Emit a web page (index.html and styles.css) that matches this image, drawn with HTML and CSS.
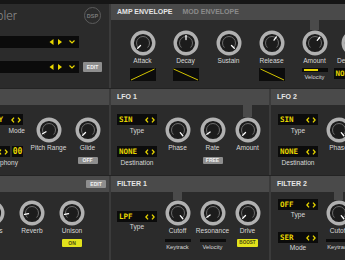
FILE: index.html
```html
<!DOCTYPE html>
<html lang="en">
<head>
<meta charset="utf-8">
<title>Sampler</title>
<link rel="stylesheet" href="styles.css">
</head>
<body>
<div class="app">
  <div class="topstrip"></div>

  <!-- ROW 1 -->
  <section class="panel">
    <div class="body main-body">
      <div class="logo-row">
        <div class="logo"><span>Sampler</span></div>
        <div class="dsp">DSP</div>
      </div>
      <div class="sel-row first">
        <div class="selbar">
          <svg class="selicons" viewBox="0 0 30 12" width="30" height="12"><path d="M4.5 3L0.5 6L4.5 9Z M9 3L13 6L9 9Z" fill="#e8d600"/><path d="M20.5 4.5L23 7L25.5 4.5" fill="none" stroke="#e8d600" stroke-width="1.2"/></svg>
        </div>
      </div>
      <div class="sel-row second">
        <div class="selbar">
          <svg class="selicons" viewBox="0 0 30 12" width="30" height="12"><path d="M4.5 3L0.5 6L4.5 9Z M9 3L13 6L9 9Z" fill="#e8d600"/><path d="M20.5 4.5L23 7L25.5 4.5" fill="none" stroke="#e8d600" stroke-width="1.2"/></svg>
        </div>
        <span class="btn grey edit-top">EDIT</span>
      </div>
    </div>
  </section>
  <div class="vdiv"></div>
  <section class="panel wide">
    <div class="band"><span class="title">AMP ENVELOPE</span><span class="title dim">MOD ENVELOPE</span></div>
    <div class="body env-body">
      <div class="col ecol">
        <div class="stem s1"></div>
        <svg class="knob" viewBox="0 0 26 26"><circle cx="13" cy="13" r="10.8"/><path d="M8.4 17.6A6.5 6.5 0 1 1 17.6 17.6"/><line x1="13" y1="5.5" x2="13" y2="9.5" transform="rotate(-135 13 13)"/></svg>
        <div class="lbl">Attack</div>
        <svg class="envbox" viewBox="0 0 26 13"><rect width="26" height="13"/><line x1="1" y1="12" x2="24.5" y2="1"/></svg>
      </div>
      <div class="col ecol">
        <div class="stem s1"></div>
        <svg class="knob" viewBox="0 0 26 26"><circle cx="13" cy="13" r="10.8"/><path d="M8.4 17.6A6.5 6.5 0 1 1 17.6 17.6"/><line x1="13" y1="5.5" x2="13" y2="9.5"/></svg>
        <div class="lbl">Decay</div>
        <svg class="envbox" viewBox="0 0 26 13"><rect width="26" height="13"/><line x1="0.5" y1="1" x2="25" y2="12"/></svg>
      </div>
      <div class="col ecol">
        <div class="stem s1"></div>
        <svg class="knob" viewBox="0 0 26 26"><circle cx="13" cy="13" r="10.8"/><path d="M8.4 17.6A6.5 6.5 0 1 1 17.6 17.6"/><line x1="13" y1="5.5" x2="13" y2="9.5" transform="rotate(135 13 13)"/></svg>
        <div class="lbl">Sustain</div>
      </div>
      <div class="col ecol">
        <div class="stem s1"></div>
        <svg class="knob" viewBox="0 0 26 26"><circle cx="13" cy="13" r="10.8"/><path d="M8.4 17.6A6.5 6.5 0 1 1 17.6 17.6"/><line x1="13" y1="5.5" x2="13" y2="9.5" transform="rotate(35 13 13)"/></svg>
        <div class="lbl">Release</div>
        <svg class="envbox" viewBox="0 0 26 13"><rect width="26" height="13"/><line x1="1.5" y1="1" x2="25" y2="12"/></svg>
      </div>
      <div class="col ecol">
        <div class="stem s1 link"></div>
        <svg class="knob" viewBox="0 0 26 26"><circle cx="13" cy="13" r="10.8"/><path d="M8.4 17.6A6.5 6.5 0 1 1 17.6 17.6"/><line x1="13" y1="5.5" x2="13" y2="9.5" transform="rotate(40 13 13)"/></svg>
        <div class="lbl">Amount</div>
        <div class="vbar top-gap"><div class="vfill" style="width:14px"></div></div>
        <div class="lbl small">Velocity</div>
      </div>
      <div class="col">
        <div class="stem s1"></div>
        <svg class="knob" viewBox="0 0 26 26"><circle cx="13" cy="13" r="10.8"/><path d="M8.4 17.6A6.5 6.5 0 1 1 17.6 17.6"/><line x1="13" y1="5.5" x2="13" y2="9.5" transform="rotate(-135 13 13)"/></svg>
        <div class="lbl">Destination</div>
        <div class="disp top-gap"><span>NONE</span><svg class="arr" viewBox="0 0 10 6"><path d="M3 0.6L0.9 3L3 5.4M7 0.6L9.1 3L7 5.4"/></svg></div>
      </div>
    </div>
  </section>

  <div class="hsep"></div>

  <!-- ROW 2 -->
  <section class="panel">
    <div class="band"></div>
    <div class="body voice-body">
      <div class="dcol left-dcol">
        <div class="disp d-first shift2"><span>POLY</span><svg class="arr" viewBox="0 0 10 6"><path d="M3 0.6L0.9 3L3 5.4M7 0.6L9.1 3L7 5.4"/></svg></div>
        <div class="lbl dl1">Mode</div>
        <div class="poly-row shift2">
          <div class="disp"><span>ON</span><svg class="arr" viewBox="0 0 10 6"><path d="M3 0.6L0.9 3L3 5.4M7 0.6L9.1 3L7 5.4"/></svg></div>
          <div class="disp num"><span>00</span></div>
        </div>
        <div class="lbl dl1 shift7">Polyphony</div>
      </div>
      <div class="col vcol">
        <div class="stem s2"></div>
        <svg class="knob" viewBox="0 0 26 26"><circle cx="13" cy="13" r="10.8"/><path d="M8.4 17.6A6.5 6.5 0 1 1 17.6 17.6"/><line x1="13" y1="5.5" x2="13" y2="9.5" transform="rotate(-120 13 13)"/></svg>
        <div class="lbl">Pitch Range</div>
      </div>
      <div class="col vcol">
        <div class="stem s2"></div>
        <svg class="knob" viewBox="0 0 26 26"><circle cx="13" cy="13" r="10.8"/><path d="M8.4 17.6A6.5 6.5 0 1 1 17.6 17.6"/><line x1="13" y1="5.5" x2="13" y2="9.5" transform="rotate(-135 13 13)"/></svg>
        <div class="lbl">Glide</div>
        <span class="btn grey b2">OFF</span>
      </div>
    </div>
  </section>
  <div class="vdiv"></div>
  <section class="panel">
    <div class="band"><span class="title">LFO 1</span></div>
    <div class="body lfo-body">
      <div class="dcol">
        <div class="disp d-first"><span>SIN</span><svg class="arr" viewBox="0 0 10 6"><path d="M3 0.6L0.9 3L3 5.4M7 0.6L9.1 3L7 5.4"/></svg></div>
        <div class="lbl dl1">Type</div>
        <div class="disp d-second"><span>NONE</span><svg class="arr" viewBox="0 0 10 6"><path d="M3 0.6L0.9 3L3 5.4M7 0.6L9.1 3L7 5.4"/></svg></div>
        <div class="lbl dl1">Destination</div>
      </div>
      <div class="col">
        <div class="stem s2"></div>
        <svg class="knob" viewBox="0 0 26 26"><circle cx="13" cy="13" r="10.8"/><path d="M8.4 17.6A6.5 6.5 0 1 1 17.6 17.6"/><line x1="13" y1="5.5" x2="13" y2="9.5" transform="rotate(140 13 13)"/></svg>
        <div class="lbl">Phase</div>
      </div>
      <div class="col">
        <div class="stem s2"></div>
        <svg class="knob" viewBox="0 0 26 26"><circle cx="13" cy="13" r="10.8"/><path d="M8.4 17.6A6.5 6.5 0 1 1 17.6 17.6"/><line x1="13" y1="5.5" x2="13" y2="9.5" transform="rotate(-125 13 13)"/></svg>
        <div class="lbl">Rate</div>
        <span class="btn grey b2">FREE</span>
      </div>
      <div class="col">
        <div class="stem s2 link"></div>
        <svg class="knob" viewBox="0 0 26 26"><circle cx="13" cy="13" r="10.8"/><path d="M8.4 17.6A6.5 6.5 0 1 1 17.6 17.6"/><line x1="13" y1="5.5" x2="13" y2="9.5" transform="rotate(-135 13 13)"/></svg>
        <div class="lbl">Amount</div>
      </div>
    </div>
  </section>
  <div class="vdiv"></div>
  <section class="panel">
    <div class="band"><span class="title">LFO 2</span></div>
    <div class="body lfo-body right">
      <div class="dcol">
        <div class="disp d-first"><span>SIN</span><svg class="arr" viewBox="0 0 10 6"><path d="M3 0.6L0.9 3L3 5.4M7 0.6L9.1 3L7 5.4"/></svg></div>
        <div class="lbl dl1">Type</div>
        <div class="disp d-second"><span>NONE</span><svg class="arr" viewBox="0 0 10 6"><path d="M3 0.6L0.9 3L3 5.4M7 0.6L9.1 3L7 5.4"/></svg></div>
        <div class="lbl dl1">Destination</div>
      </div>
      <div class="col">
        <div class="stem s2"></div>
        <svg class="knob" viewBox="0 0 26 26"><circle cx="13" cy="13" r="10.8"/><path d="M8.4 17.6A6.5 6.5 0 1 1 17.6 17.6"/><line x1="13" y1="5.5" x2="13" y2="9.5" transform="rotate(140 13 13)"/></svg>
        <div class="lbl">Phase</div>
      </div>
    </div>
  </section>

  <div class="hsep"></div>

  <!-- ROW 3 -->
  <section class="panel">
    <div class="band end"><span class="btn grey edit-band">EDIT</span></div>
    <div class="body fx-body">
      <div class="col fcol">
        <div class="stem s3"></div>
        <svg class="knob" viewBox="0 0 26 26"><circle cx="13" cy="13" r="10.8"/><path d="M8.4 17.6A6.5 6.5 0 1 1 17.6 17.6"/><line x1="13" y1="5.5" x2="13" y2="9.5" transform="rotate(-100 13 13)"/></svg>
        <div class="lbl">Chorus</div>
      </div>
      <div class="col fcol">
        <div class="stem s3"></div>
        <svg class="knob" viewBox="0 0 26 26"><circle cx="13" cy="13" r="10.8"/><path d="M8.4 17.6A6.5 6.5 0 1 1 17.6 17.6"/><line x1="13" y1="5.5" x2="13" y2="9.5" transform="rotate(-100 13 13)"/></svg>
        <div class="lbl">Reverb</div>
      </div>
      <div class="col fcol">
        <div class="stem s3"></div>
        <svg class="knob" viewBox="0 0 26 26"><circle cx="13" cy="13" r="10.8"/><path d="M8.4 17.6A6.5 6.5 0 1 1 17.6 17.6"/><line x1="13" y1="5.5" x2="13" y2="9.5" transform="rotate(-100 13 13)"/></svg>
        <div class="lbl">Unison</div>
        <span class="btn yellow b3">ON</span>
      </div>
    </div>
  </section>
  <div class="vdiv"></div>
  <section class="panel">
    <div class="band"><span class="title">FILTER 1</span></div>
    <div class="body lfo-body">
      <div class="dcol">
        <div class="disp f1-disp"><span>LPF</span><svg class="arr" viewBox="0 0 10 6"><path d="M3 0.6L0.9 3L3 5.4M7 0.6L9.1 3L7 5.4"/></svg></div>
        <div class="lbl fl">Type</div>
      </div>
      <div class="col">
        <div class="stem s3 link"></div>
        <svg class="knob" viewBox="0 0 26 26"><circle cx="13" cy="13" r="10.8"/><path d="M8.4 17.6A6.5 6.5 0 1 1 17.6 17.6"/><line x1="13" y1="5.5" x2="13" y2="9.5" transform="rotate(140 13 13)"/></svg>
        <div class="lbl">Cutoff</div>
        <div class="vbar thin b3"></div>
        <div class="lbl small">Keytrack</div>
      </div>
      <div class="col">
        <div class="stem s3"></div>
        <svg class="knob" viewBox="0 0 26 26"><circle cx="13" cy="13" r="10.8"/><path d="M8.4 17.6A6.5 6.5 0 1 1 17.6 17.6"/><line x1="13" y1="5.5" x2="13" y2="9.5" transform="rotate(-125 13 13)"/></svg>
        <div class="lbl">Resonance</div>
        <div class="vbar thin b3"></div>
        <div class="lbl small">Velocity</div>
      </div>
      <div class="col">
        <div class="stem s3"></div>
        <svg class="knob" viewBox="0 0 26 26"><circle cx="13" cy="13" r="10.8"/><path d="M8.4 17.6A6.5 6.5 0 1 1 17.6 17.6"/><line x1="13" y1="5.5" x2="13" y2="9.5" transform="rotate(-135 13 13)"/></svg>
        <div class="lbl">Drive</div>
        <span class="btn yellow b3 wide-btn">BOOST</span>
      </div>
    </div>
  </section>
  <div class="vdiv"></div>
  <section class="panel">
    <div class="band"><span class="title">FILTER 2</span></div>
    <div class="body lfo-body right">
      <div class="dcol">
        <div class="disp f2-first"><span>OFF</span><svg class="arr" viewBox="0 0 10 6"><path d="M3 0.6L0.9 3L3 5.4M7 0.6L9.1 3L7 5.4"/></svg></div>
        <div class="lbl">Type</div>
        <div class="disp f2-second"><span>SER</span><svg class="arr" viewBox="0 0 10 6"><path d="M3 0.6L0.9 3L3 5.4M7 0.6L9.1 3L7 5.4"/></svg></div>
        <div class="lbl fl">Mode</div>
      </div>
      <div class="col">
        <div class="stem s3 link"></div>
        <svg class="knob" viewBox="0 0 26 26"><circle cx="13" cy="13" r="10.8"/><path d="M8.4 17.6A6.5 6.5 0 1 1 17.6 17.6"/><line x1="13" y1="5.5" x2="13" y2="9.5" transform="rotate(140 13 13)"/></svg>
        <div class="lbl">Cutoff</div>
        <div class="vbar thin b3"></div>
        <div class="lbl small">Keytrack</div>
      </div>
    </div>
  </section>
</div>
</body>
</html>
```

FILE: styles.css
```css
* { box-sizing: border-box; margin: 0; padding: 0; }
html, body { width: 345px; height: 260px; overflow: hidden; background: #2b2b2b; }
body {
  font-family: "Liberation Sans", Arial, sans-serif;
  font-size: 6.6px;
  line-height: 8px;
  color: #d8d8d8;
}
.app {
  display: grid;
  grid-template-columns: 109px 2px 158px 2px 74px;
  grid-template-rows: 4px 84px 1px 86px 1px 84px;
  width: 345px;
  height: 260px;
}
.topstrip { grid-column: 1 / -1; background: #161616; }
.hsep { grid-column: 1 / -1; background: #232323; }
.vdiv { background: #3b3b3b; }

.panel {
  display: flex;
  flex-direction: column;
  background: #2b2b2b;
  min-width: 0;
  overflow: hidden;
}
.panel.wide { grid-column: 3 / 6; }
.band {
  height: 16px;
  flex: none;
  background: #4a4a4a;
  display: flex;
  align-items: center;
  padding-left: 6px;
  gap: 10px;
}
.band.end { justify-content: flex-end; padding-right: 3px; }
.title {
  font-family: "Liberation Sans Narrow", "Liberation Sans", Arial, sans-serif;
  font-weight: 700;
  font-size: 7px;
  color: #e6e6e6;
  white-space: nowrap;
}
.title.dim { color: #8a8a8a; }
.body { flex: 1; display: flex; min-height: 0; }

/* knob columns */
.col {
  width: 35px;
  flex: none;
  display: flex;
  flex-direction: column;
  align-items: center;
}
.ecol { width: 43px; }
.vcol { width: 39px; }
.fcol { width: 40px; }
.env-body { padding-left: 10px; }
.stem { width: 9px; flex: none; }
.stem.s1 { height: 10px; }
.stem.s2 { height: 12px; }
.stem.s3 { height: 8px; }
.stem.link { background: #4a4a4a; }
.knob { width: 26px; height: 26px; flex: none; display: block; }
.knob circle { fill: #1c1c1c; stroke: #b1b1b1; stroke-width: 3.4; }
.knob path { fill: none; stroke: #6c6c6c; stroke-width: 1; }
.knob line { stroke: #ffffff; stroke-width: 1.3; stroke-linecap: round; }
.lbl { margin-top: 1px; white-space: nowrap; text-align: center; color: #d8d8d8; }
.lbl.small { font-size: 5.8px; margin-top: 1px; }

.envbox { width: 26px; height: 13px; margin-top: 3px; display: block; }
.envbox rect { fill: #0c0c0c; }
.envbox line { stroke: #d2c300; stroke-width: 1; }

.vbar { width: 26px; height: 4px; background: #0c0c0c; padding: 1px 2px; flex: none; }
.vbar.thin { height: 3px; padding: 0; }
.vfill { height: 2px; background: #e8d600; }
.top-gap { margin-top: 3px; }
.b3 { margin-top: 4px; }

/* yellow displays */
.disp {
  width: 40px;
  height: 11px;
  flex: none;
  background: #0b0b0b;
  display: flex;
  align-items: center;
  justify-content: space-between;
  padding: 0 2px 0 2px;
  font-family: "DejaVu Sans Mono", "Liberation Mono", monospace;
  font-weight: 700;
  font-size: 7.5px;
  color: #e8d600;
  white-space: nowrap;
}
.disp.num { width: 11px; justify-content: center; padding: 0; font-size: 8px; }
.arr { width: 10px; height: 6px; display: block; flex: none; }
.arr path { fill: none; stroke: #e8d600; stroke-width: 1.3; }

.dcol { width: 40px; flex: none; display: flex; flex-direction: column; align-items: center; }
.d-first { margin-top: 9px; }
.d-second { margin-top: 11px; }
.dl1 { margin-top: 2px; }
.f1-disp { margin-top: 19px; }
.fl { margin-top: 1px; }
.f2-first { margin-top: 7px; }
.f2-second { margin-top: 13px; }
.lfo-body { padding-left: 6px; }
.lfo-body .dcol { margin-right: 3px; }
.lfo-body.right { padding-left: 7px; }

/* buttons */
.btn {
  display: flex;
  align-items: center;
  justify-content: center;
  width: 20px;
  height: 8px;
  flex: none;
  font-family: "Liberation Sans", Arial, sans-serif;
  font-weight: 700;
  font-size: 5px;
  line-height: 1;
  border-radius: 1px;
}
.btn.grey { background: #8e8e8e; color: #f2f2f2; }
.btn.yellow { background: #e2e21c; color: #4a4a10; }
.btn.wide-btn { width: 21px; font-size: 4.6px; }
.b2 { margin-top: 5px; height: 7px; }

/* left main panel */
.main-body { flex-direction: column; padding-top: 3px; }
.logo-row { display: flex; align-items: center; height: 17px; flex: none; }
.logo {
  width: 17px;
  display: flex;
  justify-content: flex-end;
  white-space: nowrap;
  font-family: Roboto, "Open Sans", sans-serif;
  font-weight: 300;
  font-size: 12.5px;
  line-height: 17px;
  color: #8c8c8c;
}
.dsp {
  margin-left: auto;
  margin-right: 8px;
  width: 17px;
  height: 17px;
  border: 1px solid #5c5c5c;
  border-radius: 50%;
  display: flex;
  align-items: center;
  justify-content: center;
  font-weight: 700;
  font-size: 5.5px;
  color: #7a7a7a;
}
.sel-row { display: flex; align-items: center; flex: none; }
.sel-row.first { margin-top: 12px; }
.sel-row.second { margin-top: 13px; }
.selbar {
  width: 79px;
  height: 12px;
  background: #0b0b0b;
  display: flex;
  justify-content: flex-end;
  padding-right: 0;
}
.selicons { display: block; }
.edit-top { width: 19px; height: 10px; margin-left: 4px; background: #979797; }
.edit-band { width: 20px; height: 8px; background: #a3a3a3; }

/* voice (left row 2) */
.left-dcol { width: 25px; align-items: flex-end; margin-right: 4px; }
.shift2 { margin-right: 2px; }
.shift7 { margin-right: 7px; }
.poly-row { display: flex; gap: 2px; margin-top: 11px; flex: none; }

/* fx (left row 3) */
.fx-body { justify-content: flex-end; padding-right: 17px; }
```
